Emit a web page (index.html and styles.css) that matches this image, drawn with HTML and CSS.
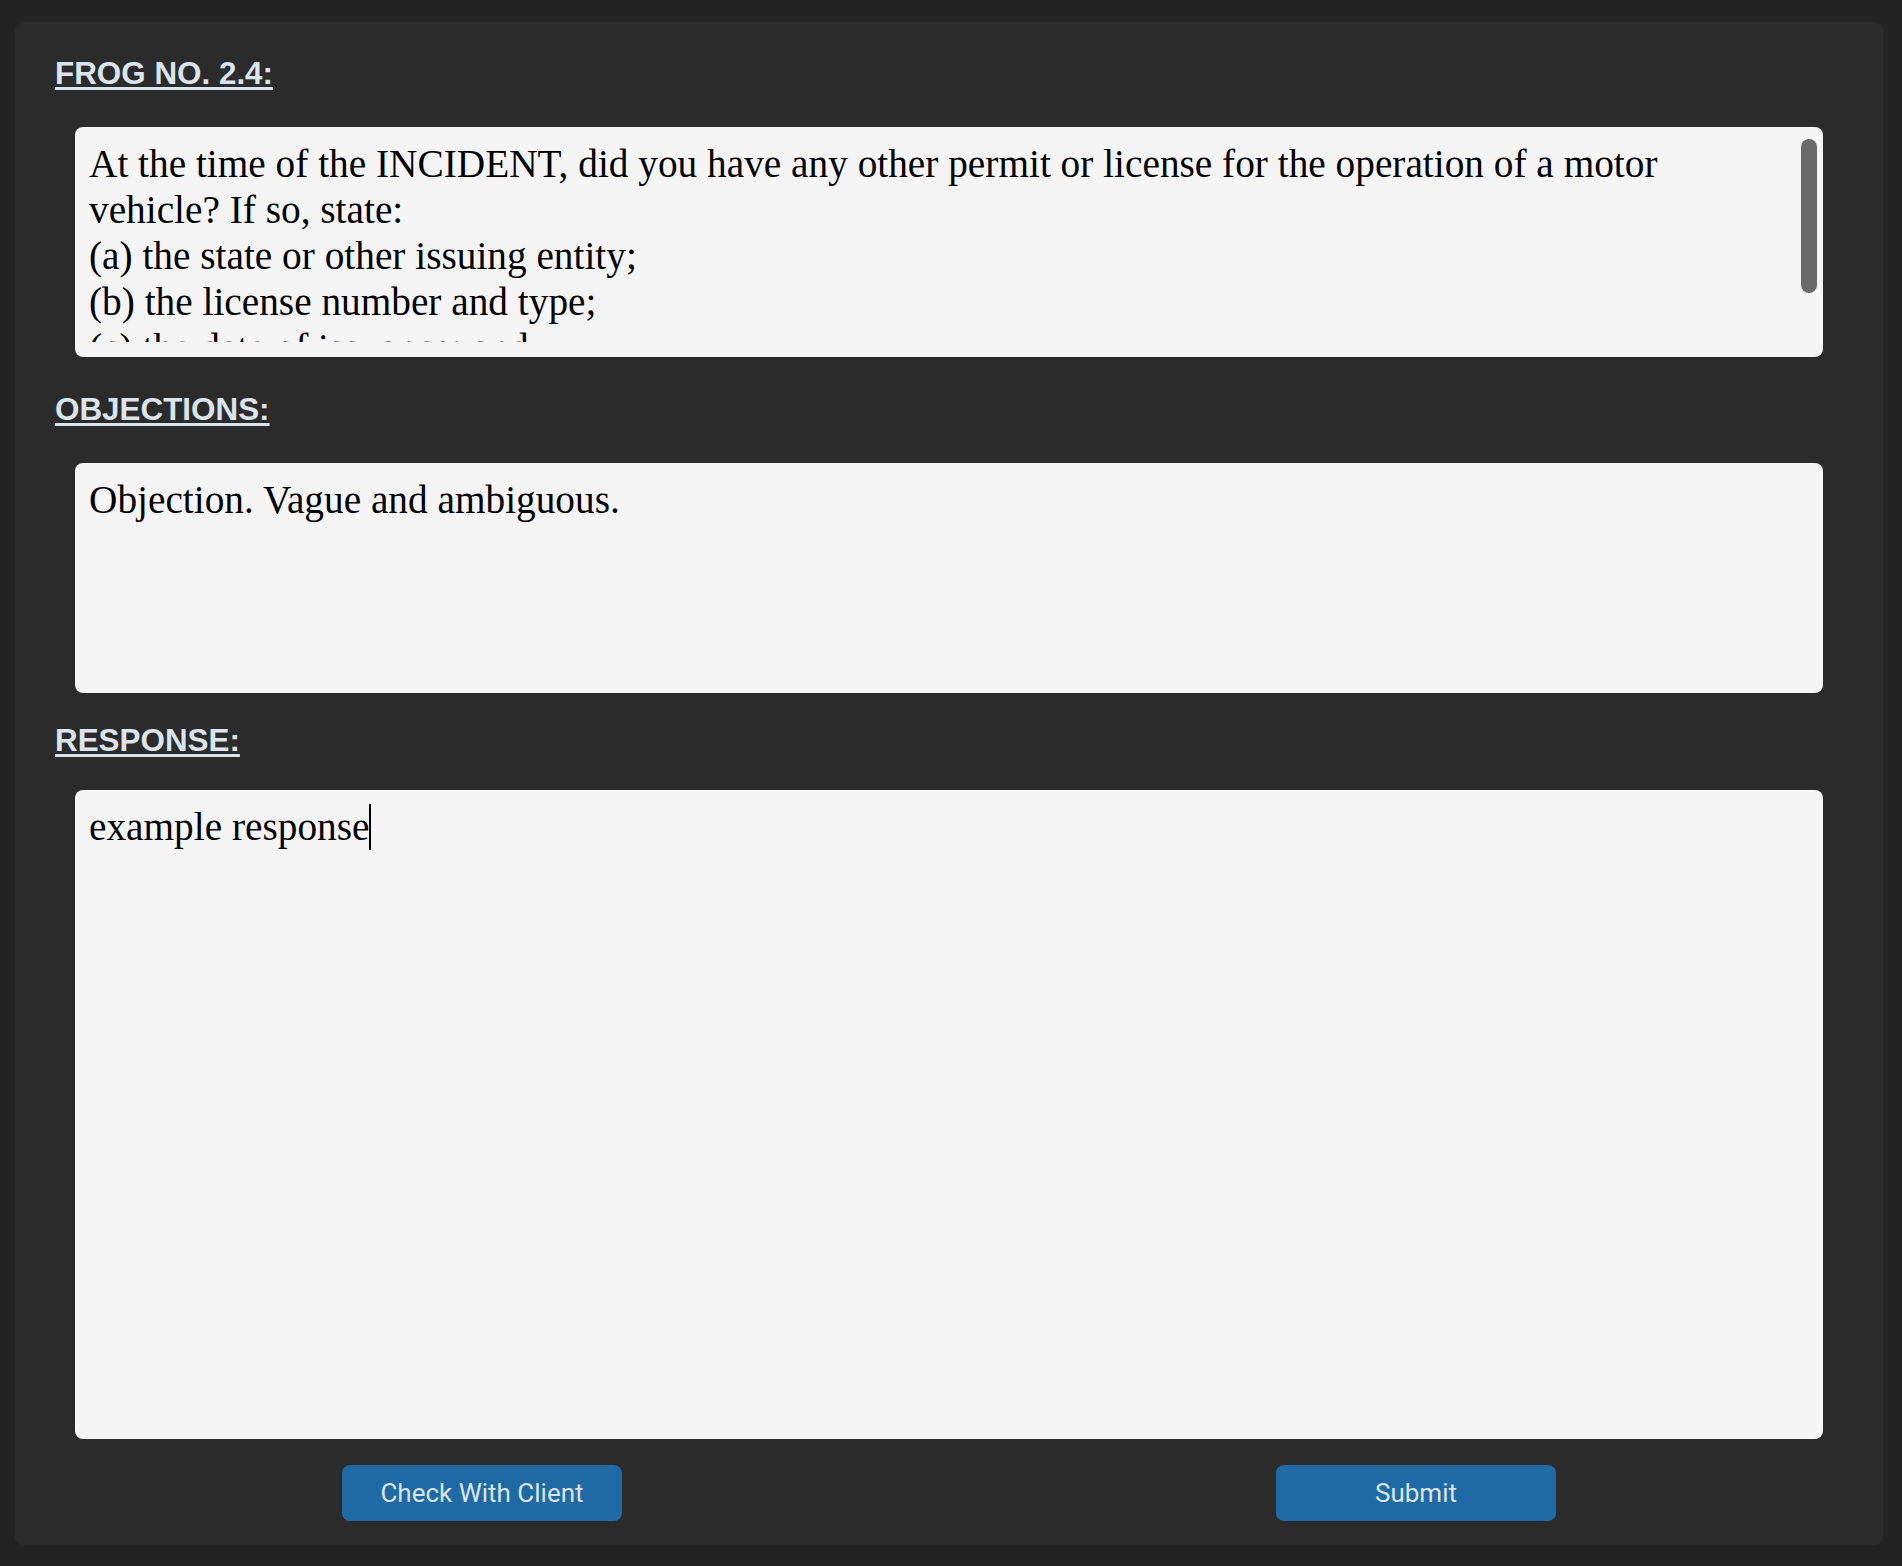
FILE: index.html
```html
<!DOCTYPE html>
<html lang="en">
<head>
<meta charset="utf-8">
<title>FROG NO. 2.4</title>
<link rel="stylesheet" href="styles.css">
</head>
<body>
  <main class="card">
    <h2 class="label label-first">FROG NO. 2.4:</h2>
    <div class="box box-short box-scroll">
      <div class="box-text">At the time of the INCIDENT, did you have any other permit or license for the operation of a motor vehicle? If so, state:<br>(a) the state or other issuing entity;<br>(b) the license number and type;<br>(c) the date of issuance; and<br>(d) the date of expiration.</div>
      <div class="scroll-track"><div class="scroll-thumb"></div></div>
    </div>

    <h2 class="label">OBJECTIONS:</h2>
    <div class="box box-short">
      <div class="box-text">Objection. Vague and ambiguous.</div>
    </div>

    <h2 class="label label-tight">RESPONSE:</h2>
    <div class="box box-tall box-response">
      <div class="box-text">example response<span class="caret"></span></div>
    </div>

    <div class="actions">
      <button class="btn" type="button">Check With Client</button>
      <button class="btn" type="button">Submit</button>
    </div>
  </main>
</body>
</html>
```

FILE: styles.css
```css
html, body {
  margin: 0;
  padding: 0;
}

body {
  background: #242424;
  padding: 22px 19px 21px 15px;
  min-height: 1566px;
  box-sizing: border-box;
}

.card {
  background: #2b2b2b;
  border-radius: 8px;
  padding: 33px 0 24px;
  display: flex;
  flex-direction: column;
}

.label {
  margin: 34px 0 0 40px;
  font-family: "Liberation Sans", Arial, sans-serif;
  font-weight: 700;
  font-size: 31.4px;
  line-height: 37px;
  height: 37px;
  color: #dce4ee;
  text-decoration: underline;
  text-decoration-thickness: 3px;
  text-underline-offset: 3px;
  align-self: flex-start;
}

.label-first {
  margin-top: 0;
}

.label-tight {
  margin-top: 29px;
}

.box {
  margin: 35px 60px 0;
  background: #f5f5f5;
  border-radius: 8px;
  padding: 14px 6px 15px 14px;
  display: flex;
  box-sizing: border-box;
}

.box-short {
  height: 230px;
}

.box-tall {
  height: 649px;
}

.label-tight + .box {
  margin-top: 31px;
}

.box-text {
  flex: 1;
  overflow: hidden;
  font-family: "Liberation Serif", "Times New Roman", serif;
  font-size: 39.3px;
  line-height: 46px;
  color: #000;
  padding-right: 10px;
}

.caret {
  display: inline-block;
  width: 2px;
  height: 46px;
  background: #000;
  vertical-align: top;
}

.scroll-track {
  width: 16px;
  margin-top: -2px;
  flex: none;
}

.scroll-thumb {
  height: 154px;
  border-radius: 8px;
  background: #6a6a6a;
}

.actions {
  margin-top: 26px;
  display: grid;
  grid-template-columns: 1fr 1fr;
  justify-items: center;
}

.btn {
  width: 280px;
  height: 56px;
  border: 0;
  border-radius: 8px;
  background: #1f6aa5;
  color: #dce4ee;
  font-family: Roboto, "Noto Sans", sans-serif;
  font-size: 26px;
  font-weight: 400;
  padding: 0;
  cursor: pointer;
}
```
